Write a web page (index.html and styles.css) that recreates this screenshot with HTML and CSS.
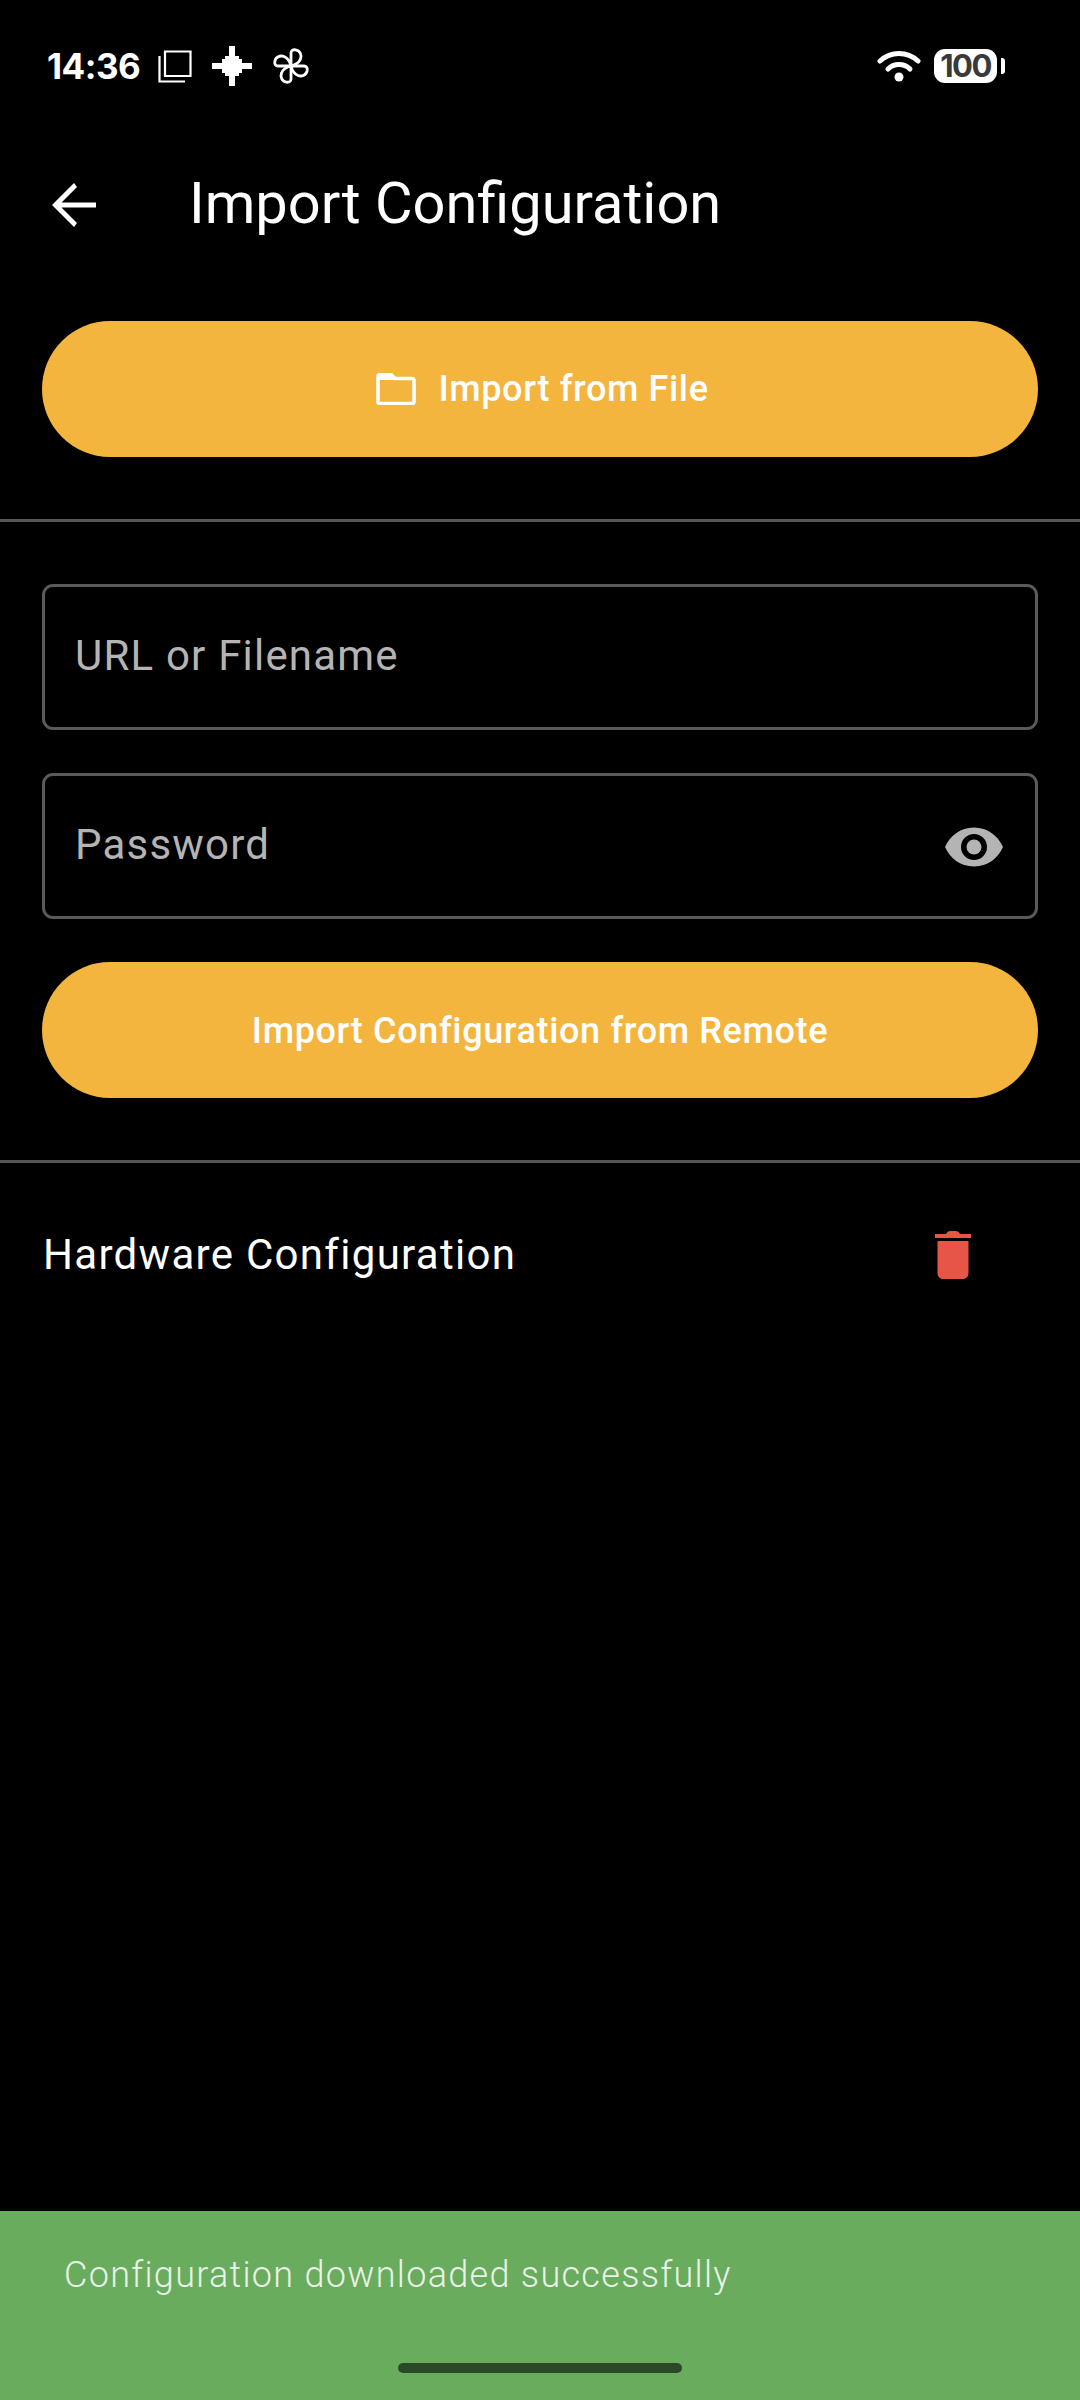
FILE: index.html
```html
<!DOCTYPE html>
<html lang="en">
<head>
<meta charset="utf-8">
<title>Import Configuration</title>
<link rel="stylesheet" href="styles.css">
</head>
<body>
<div class="screen">
  <div class="status">
    <div class="status-left">
      <span class="time">14:36</span>
      <svg class="ic-copy" viewBox="0 0 34 34"><path d="M7 2.500H32.500V27H7Z" fill="none" stroke="#fff" stroke-width="2.200"/><path d="M1.500 7V32.500H27" fill="none" stroke="#fff" stroke-width="2.200"/></svg>
      <svg class="ic-plus" viewBox="0 0 40 40"><path d="M17 0H23V10H27V13H30V17H40V23H30V27H27V30H23V40H17V30H13V27H10V23H0V17H10V13H13V10H17Z" fill="#fff"/></svg>
      <svg class="ic-fan" viewBox="0 0 36 36">
        <g fill="none" stroke="#fff" stroke-width="2.800" stroke-linejoin="round">
          <path d="M18 18V5C18 2.500 20 1.500 22.500 1.800 27 2.500 29 7 27.500 11 26 15 22 17 18 18Z"/>
          <path d="M18 18H31C33.500 18 34.500 20 34.200 22.500 33.500 27 29 29 25 27.500 21 26 19 22 18 18Z"/>
          <path d="M18 18V31C18 33.500 16 34.500 13.500 34.200 9 33.500 7 29 8.500 25 10 21 14 19 18 18Z"/>
          <path d="M18 18H5C2.500 18 1.500 16 1.800 13.500 2.500 9 7 7 11 8.500 15 10 17 14 18 18Z"/>
        </g>
      </svg>
    </div>
    <div class="status-right">
      <svg class="ic-wifi" viewBox="0 0 44 32"><path d="M3 11C14 1 30 1 41 11" fill="none" stroke="#fff" stroke-width="5" stroke-linecap="round"/><path d="M11 19C17 13 27 13 33 19" fill="none" stroke="#fff" stroke-width="5" stroke-linecap="round"/><circle cx="22" cy="27" r="4.500" fill="#fff"/></svg>
      <span class="battery">100</span>
      <span class="battery-tip"></span>
    </div>
  </div>

  <header class="appbar">
    <svg class="ic-back" viewBox="0 0 44 44"><path d="M44 19.500H9.500L25 4 22 0 0 22 22 44 25 40 9.500 24.500H44Z" fill="#fff"/></svg>
    <h1 class="title">Import Configuration</h1>
  </header>

  <section class="pad first">
    <button class="btn btn-file" type="button">
      <svg class="ic-folder" viewBox="0 0 40 32"><path d="M2 3.500C2 2.500 2.800 1.500 4 1.500H15L19 5.500H36C37.500 5.500 38 6.500 38 7.500V28.500C38 29.500 37.500 30.500 36 30.500H4C2.800 30.500 2 29.500 2 28.500Z" fill="none" stroke="#fff" stroke-width="3.600" stroke-linejoin="round"/><path d="M2 3H15L19 7H2Z" fill="#fff"/></svg>
      <span>Import from File</span>
    </button>
  </section>

  <hr class="divider">

  <section class="pad form">
    <div class="field"><span class="placeholder">URL or Filename</span></div>
    <div class="field">
      <span class="placeholder">Password</span>
      <svg class="ic-eye" viewBox="0 0 58 40"><path fill-rule="evenodd" d="M29 0.500C43 0.500 53 9 58 20 53 31 43 39.500 29 39.500 15 39.500 5 31 0 20 5 9 15 0.500 29 0.500ZM29 7A13 13 0 1 0 29 33 13 13 0 1 0 29 7Z" fill="#b4b4b4"/><circle cx="29" cy="20" r="7.500" fill="#b4b4b4"/></svg>
    </div>
    <button class="btn" type="button"><span class="btn-label">Import Configuration from Remote</span></button>
  </section>

  <hr class="divider">

  <section class="hw-row">
    <span class="hw-label">Hardware Configuration</span>
    <svg class="ic-trash" viewBox="0 0 38 48"><path d="M12 3C13 1 14.500 0 16 0H22C23.500 0 25 1 26 3H37V7H1V3ZM3.500 10H34.500V42C34.500 45.500 32 48 29 48H9C6 48 3.500 45.500 3.500 42Z" fill="#e65545"/></svg>
  </section>

  <footer class="snackbar">
    <span class="snack-text">Configuration downloaded successfully</span>
    <div class="home-bar"></div>
  </footer>
</div>
</body>
</html>
```

FILE: styles.css
```css
* { box-sizing: border-box; }
html, body { margin: 0; padding: 0; background: #000; }
.screen {
  width: 1080px;
  height: 2400px;
  background: #000;
  display: flex;
  flex-direction: column;
  font-family: Roboto, sans-serif;
  color: #fff;
  position: relative;
  overflow: hidden;
}
.status {
  height: 95px;
  padding: 41px 75px 0 47px;
  display: flex;
  justify-content: space-between;
  align-items: flex-start;
}
.status-left, .status-right { display: flex; align-items: center; height: 50px; }
.time { font-family: Inter, sans-serif; font-weight: 700; font-size: 35px; letter-spacing: -0.5px; width: 111px; }
.ic-copy { width: 34px; height: 34px; }
.ic-plus { width: 40px; height: 40px; margin-left: 20px; }
.ic-fan { width: 36px; height: 36px; margin-left: 21px; }
.ic-wifi { width: 44px; height: 32px; margin-right: 13px; }
.battery {
  width: 63px; height: 34px; border-radius: 11px; background: #fff; color: #3a3a3a;
  font-family: Inter, sans-serif; font-weight: 700; font-size: 31px; line-height: 34px; text-align: center; letter-spacing: -1.500px;
}
.battery-tip { width: 4px; height: 16px; background: #fff; border-radius: 0 3px 3px 0; margin-left: 4px; }
.appbar { height: 216px; display: flex; align-items: center; padding-left: 52px; }
.ic-back { width: 44px; height: 44px; margin-top: 3px; }
.title { margin: 0 0 0 93px; font-weight: 400; font-size: 57.750px; line-height: 80px; }
.pad { padding: 0 42px; }
.first { margin-top: 10px; }
.btn {
  width: 100%; height: 136px; border: 0; border-radius: 68px; background: #f4b53f; color: #fff;
  font-family: Roboto, sans-serif; font-weight: 500; font-size: 36px; letter-spacing: 0.640px;
  display: flex; align-items: center; justify-content: center; gap: 22px; padding: 0;
}
.btn-file { padding-left: 5px; }
.btn-label { padding-top: 2px; }
.ic-folder { width: 40px; height: 32px; }
.divider { border: 0; height: 3px; background: #555; margin: 62px 0 0; }
.form { margin-top: 62px; display: flex; flex-direction: column; gap: 43px; }
.field {
  height: 146px; border: 3px solid #5a5a5a; border-radius: 11px; padding: 0 32px 0 30px;
  display: flex; align-items: center; justify-content: space-between;
}
.placeholder { font-size: 42px; letter-spacing: 1.200px; color: #b4b4b4; margin-bottom: 3px; }
.ic-eye { width: 58px; height: 40px; margin-top: 2px; }
.hw-row { height: 184px; padding: 0 108px 0 43px; display: flex; align-items: center; justify-content: space-between; }
.hw-label { font-size: 42px; letter-spacing: 1.300px; margin-bottom: 2px; }
.ic-trash { width: 38px; height: 48px; }
.snackbar {
  position: absolute; left: 0; right: 0; bottom: 0; height: 189px; background: #69ac5e;
  padding: 43px 64px 0;
}
.snack-text { font-size: 36px; letter-spacing: 1.300px; color: #e9f3e7; font-weight: 300; }
.home-bar { position: absolute; left: 398px; top: 152px; width: 284px; height: 10px; border-radius: 5px; background: #2a4a27; }
```
